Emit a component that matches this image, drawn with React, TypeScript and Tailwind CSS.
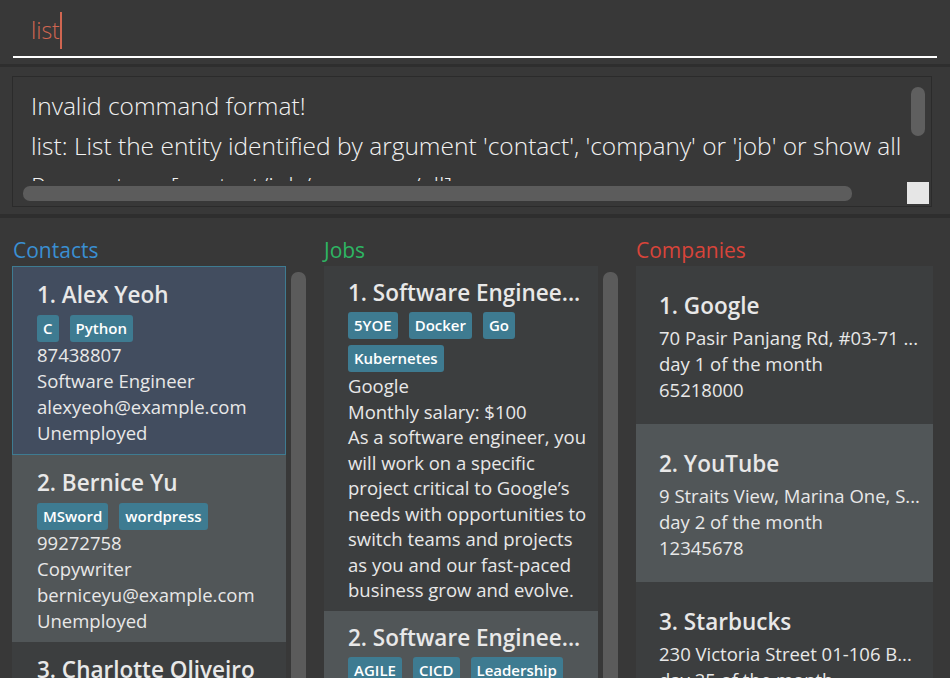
import React from "react"

type Contact = { name: string; tags: string[]; phone: string; job: string; email: string; status: string }
type Job = { name: string; tags: string[][]; company: string; salary: string; desc: string[] }
type Company = { name: string; address: string; day: string; phone: string }

const contacts: Contact[] = [
    { name: "1. Alex Yeoh", tags: ["C", "Python"], phone: "87438807", job: "Software Engineer", email: "alexyeoh@example.com", status: "Unemployed" },
    { name: "2. Bernice Yu", tags: ["MSword", "wordpress"], phone: "99272758", job: "Copywriter", email: "berniceyu@example.com", status: "Unemployed" },
    { name: "3. Charlotte Oliveiro", tags: ["Java"], phone: "93210283", job: "Designer", email: "charlotte@example.com", status: "Unemployed" },
]

const jobs: Job[] = [
    {
        name: "1. Software Enginee...",
        tags: [["5YOE", "Docker", "Go"], ["Kubernetes"]],
        company: "Google",
        salary: "Monthly salary: $100",
        desc: [
            "As a software engineer, you",
            "will work on a specific",
            "project critical to Google\u2019s",
            "needs with opportunities to",
            "switch teams and projects",
            "as you and our fast-paced",
            "business grow and evolve.",
        ],
    },
    {
        name: "2. Software Enginee...",
        tags: [["AGILE", "CICD", "Leadership"]],
        company: "YouTube",
        salary: "Monthly salary: $200",
        desc: ["Work on video platform"],
    },
]

const companies: Company[] = [
    { name: "1. Google", address: "70 Pasir Panjang Rd, #03-71 ...", day: "day 1 of the month", phone: "65218000" },
    { name: "2. YouTube", address: "9 Straits View, Marina One, S...", day: "day 2 of the month", phone: "12345678" },
    { name: "3. Starbucks", address: "230 Victoria Street 01-106 B...", day: "day 25 of the month", phone: "63381234" },
]

const cardBg = (i: number) => (i % 2 === 0 ? "bg-[#3c3e3f]" : "bg-[#515658]")

function Tag({ label }: { label: string }) {
    return (
        <span className="h-[27px] px-[6px] rounded-[3px] bg-[#3e7b91] text-white font-semibold text-[15px] leading-[27px]">
            {label}
        </span>
    )
}

function ScrollTrack() {
    return (
        <div className="w-[24px] shrink-0 pt-[6px] pl-[5px]">
            <div className="w-[15px] h-[600px] rounded-[7px] bg-[#5b5b5b]" />
        </div>
    )
}

export default function App() {
    return (
        <div className="w-[950px] h-[678px] overflow-hidden bg-[#383838] flex flex-col font-['Open_Sans',sans-serif] text-[#e8e8e8]">
            {/* command box */}
            <div className="h-[64px] shrink-0 px-[13px] pt-[8px]">
                <div className="h-[50px] border-b-2 border-white flex items-center pl-[18px] pb-[4px]">
                    <span className="text-[#d06651] font-light text-[23px] leading-[30px]">list</span>
                    <span className="w-[2px] h-[37px] bg-[#d06651]" />
                </div>
            </div>
            <div className="h-[3px] shrink-0 bg-[#2e2e2e]" />

            {/* result display */}
            <div className="h-[147px] shrink-0 pt-[9px] px-[12px]">
                <div className="h-[131px] w-[920px] border border-[#2b2b2b] flex flex-col">
                    <div className="h-[104px] flex overflow-hidden">
                        <div className="flex-1 pl-[18px] pt-[9px] font-light text-[24.5px] leading-[40px] text-[#f2f2f2] whitespace-nowrap overflow-hidden">
                            <div>Invalid command format!</div>
                            <div>list: List the entity identified by argument 'contact', 'company' or 'job' or show all</div>
                            <div>Parameters: [contact/job/company/all]</div>
                        </div>
                        <div className="w-[25px] shrink-0 pt-[10px] pl-[5px]">
                            <div className="w-[14px] h-[49px] rounded-[7px] bg-[#5f5f5f]" />
                        </div>
                    </div>
                    <div className="h-[25px] flex items-start">
                        <div className="ml-[10px] mt-[5px] w-[829px] h-[15px] rounded-[7px] bg-[#5c5c5c]" />
                        <div className="ml-auto mr-[2px] mt-[1px] w-[22px] h-[22px] bg-[#e6e6e6]" />
                    </div>
                </div>
            </div>
            <div className="h-[4px] shrink-0 bg-[#2e2e2e]" />

            {/* lists */}
            <div className="flex-1 flex gap-[14px] px-[12px] overflow-hidden">
                {/* contacts */}
                <div className="w-[298px] flex flex-col">
                    <div className="h-[48px] shrink-0 flex items-end pb-[2px] pl-[1px] text-[21px] leading-[28px] text-[#3a8fd2]">Contacts</div>
                    <div className="flex flex-1">
                        <div className="w-[274px] flex flex-col">
                            {contacts.map((c, i) => (
                                <div
                                    key={c.name}
                                    className={
                                        i === 0
                                            ? "border border-[#3e7b91] bg-[#424d5f] pl-[24px] pt-[11px] pb-[8px]"
                                            : `${cardBg(i)} pl-[25px] pt-[11px] pb-[8px]`
                                    }
                                >
                                    <div className="font-semibold text-[22.5px] leading-[34px] whitespace-nowrap">{c.name}</div>
                                    <div className="flex gap-[11px] mt-[3px]">
                                        {c.tags.map((t) => (
                                            <Tag key={t} label={t} />
                                        ))}
                                    </div>
                                    <div className="text-[18.5px] leading-[26px]">
                                        <div>{c.phone}</div>
                                        <div>{c.job}</div>
                                        <div>{c.email}</div>
                                        <div>{c.status}</div>
                                    </div>
                                </div>
                            ))}
                        </div>
                        <ScrollTrack />
                    </div>
                </div>

                {/* jobs */}
                <div className="w-[298px] flex flex-col">
                    <div className="h-[48px] shrink-0 flex items-end pb-[2px] text-[21px] leading-[28px] text-[#2eb563]">Jobs</div>
                    <div className="flex flex-1">
                        <div className="w-[274px] flex flex-col">
                            {jobs.map((j, i) => (
                                <div key={j.name} className={`${cardBg(i)} pl-[24px] pt-[10px] pb-[8px]`}>
                                    <div className="font-semibold text-[22.5px] leading-[34px] whitespace-nowrap">{j.name}</div>
                                    <div className="flex flex-col gap-[6px] mt-[2px]">
                                        {j.tags.map((row, r) => (
                                            <div key={r} className="flex gap-[11px]">
                                                {row.map((t) => (
                                                    <Tag key={t} label={t} />
                                                ))}
                                            </div>
                                        ))}
                                    </div>
                                    <div className="text-[18.5px] leading-[25.5px] mt-[1px] whitespace-nowrap">
                                        <div>{j.company}</div>
                                        <div>{j.salary}</div>
                                        {j.desc.map((d) => (
                                            <div key={d}>{d}</div>
                                        ))}
                                    </div>
                                </div>
                            ))}
                        </div>
                        <ScrollTrack />
                    </div>
                </div>

                {/* companies */}
                <div className="w-[297px] flex flex-col">
                    <div className="h-[48px] shrink-0 flex items-end pb-[2px] text-[21px] leading-[28px] text-[#d8443a]">Companies</div>
                    <div className="flex flex-col">
                        {companies.map((c, i) => (
                            <div key={c.name} className={`${cardBg(i)} pl-[23px] pt-[23px] pb-[21px]`}>
                                <div className="font-semibold text-[22.5px] leading-[34px]">{c.name}</div>
                                <div className="text-[18.5px] leading-[26px] mt-[2px] whitespace-nowrap">
                                    <div>{c.address}</div>
                                    <div>{c.day}</div>
                                    <div>{c.phone}</div>
                                </div>
                            </div>
                        ))}
                    </div>
                </div>
            </div>
        </div>
    )
}
